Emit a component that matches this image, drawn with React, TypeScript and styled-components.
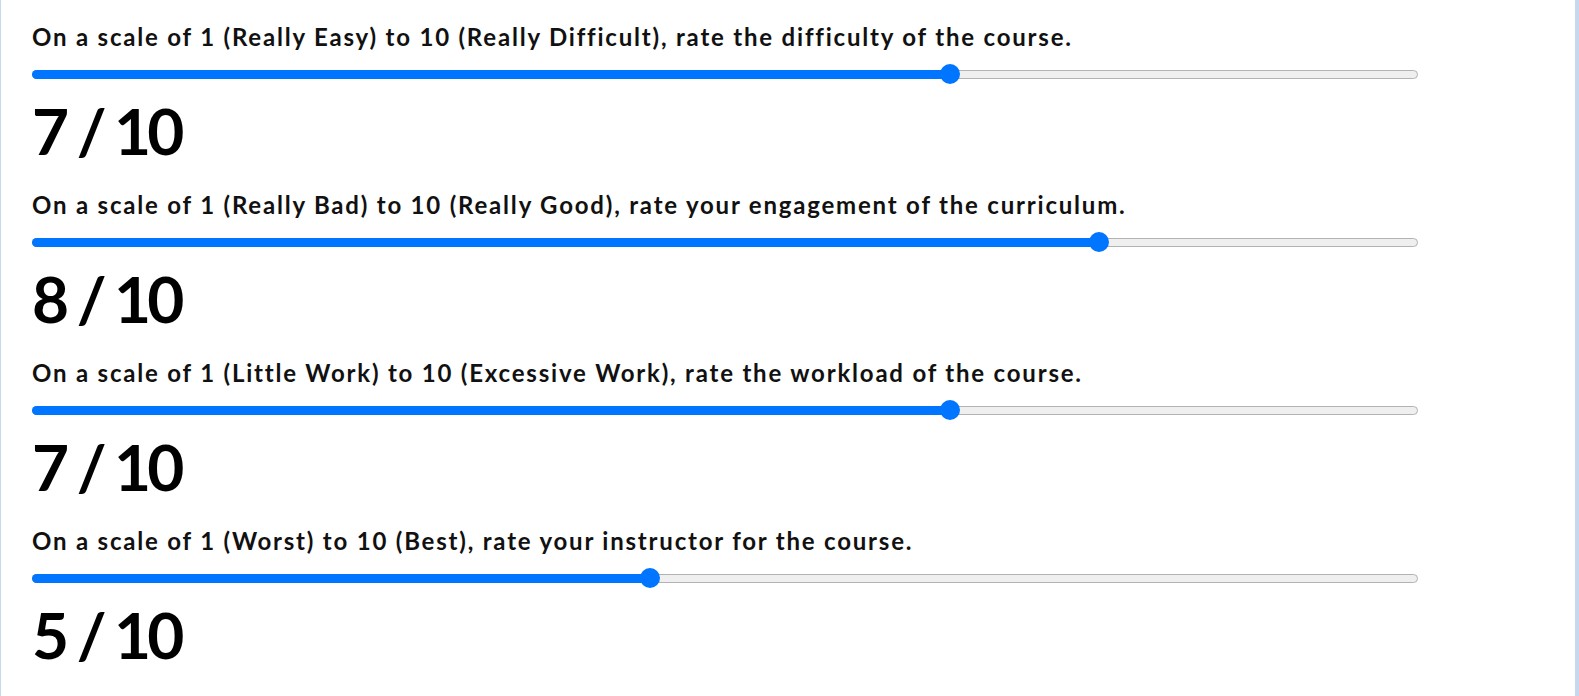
import React from 'react'
import styled, { createGlobalStyle } from 'styled-components'

const GlobalStyle = createGlobalStyle`
  html, body {
    margin: 0;
    padding: 0;
    background: #ffffff;
  }
`

const Page = styled.div`
  box-sizing: border-box;
  min-height: 100vh;
  padding: 22px 0 0 31px;
  border-left: 1px solid #c6d8ef;
  border-right: 4px solid #c6d8ef;
  background: #ffffff;
`

const Question = styled.div`
  display: flex;
  flex-direction: column;
  width: 1386px;
  margin-bottom: 21px;
`

const Label = styled.label`
  font-family: 'Lato', 'Noto Sans', sans-serif;
  font-size: 24px;
  font-weight: 700;
  line-height: 30px;
  letter-spacing: 1.8px;
  color: #111111;
  white-space: nowrap;
`

const SliderRow = styled.div`
  display: flex;
  align-items: center;
  height: 20px;
  margin-top: 12px;
`

const Track = styled.div`
  position: relative;
  flex: 1;
  box-sizing: border-box;
  height: 9px;
  background: #efefef;
  border: 1px solid #b2b2b2;
  border-radius: 5px;
`

const Fill = styled.div`
  position: absolute;
  left: -1px;
  top: -1px;
  bottom: -1px;
  background: #0075ff;
  border-radius: 5px 0 0 5px;
`

const Thumb = styled.div`
  position: absolute;
  top: 50%;
  width: 20px;
  height: 20px;
  margin: -10px 0 0 -10px;
  border-radius: 50%;
  background: #0075ff;
`

const Value = styled.div`
  margin-top: 9px;
  font-family: 'Lato', sans-serif;
  font-size: 64px;
  font-weight: 700;
  line-height: 76px;
  letter-spacing: -4px;
  color: #000000;
`

type QuestionProps = {
  label: string
  value: number
  min?: number
  max?: number
}

const TRACK_WIDTH = 1386
const INSET = 19.5

const Rating = ({ label, value, min = 1, max = 10 }: QuestionProps) => {
  const frac = (value - min) / (max - min)
  const center = INSET + frac * (TRACK_WIDTH - 2 * INSET)
  return (
    <Question>
      <Label>{label}</Label>
      <SliderRow>
        <Track>
          <Fill style={{ width: center }} />
          <Thumb style={{ left: center - 1 }} />
        </Track>
      </SliderRow>
      <Value>
        {value} / {max}
      </Value>
    </Question>
  )
}

const questions: QuestionProps[] = [
  {
    label:
      'On a scale of 1 (Really Easy) to 10 (Really Difficult), rate the difficulty of the course.',
    value: 7,
  },
  {
    label:
      'On a scale of 1 (Really Bad) to 10 (Really Good), rate your engagement of the curriculum.',
    value: 8,
  },
  {
    label:
      'On a scale of 1 (Little Work) to 10 (Excessive Work), rate the workload of the course.',
    value: 7,
  },
  {
    label: 'On a scale of 1 (Worst) to 10 (Best), rate your instructor for the course.',
    value: 5,
  },
]

export default function App() {
  return (
    <>
      <GlobalStyle />
      <Page>
        {questions.map((q, i) => (
          <Rating key={i} label={q.label} value={q.value} />
        ))}
      </Page>
    </>
  )
}
